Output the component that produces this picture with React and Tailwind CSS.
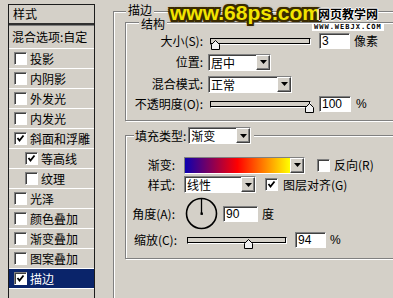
import React from 'react'

const sunken = 'border border-t-[#808080] border-l-[#808080] border-r-white border-b-white shadow-[inset_1px_1px_0_#404040]'
const raised = 'border border-t-white border-l-white border-r-[#404040] border-b-[#404040] shadow-[inset_-1px_-1px_0_#808080]'

const Check = ({ checked }) => (
    <span className={`flex items-center justify-center w-[13px] h-[13px] shrink-0 bg-white ${sunken}`}>
        {checked && (
            <svg width="9" height="9" viewBox="0 0 9 9">
                <path d="M1.5 4 L3.5 6.5 L7.5 1.5" fill="none" stroke="#000" strokeWidth="1.8" />
            </svg>
        )}
    </span>
)

const Field = ({ value, className }) => (
    <div className={`h-[16px] bg-white ${sunken} ${className} text-[12px] leading-[14px] pl-[2px] text-black [font-family:'Liberation_Sans',sans-serif]`}>
        {value}
    </div>
)

const Arrow = ({ className = '' }) => (
    <span className={`flex items-center justify-center w-[14px] bg-[#d4d0c8] ${raised} ${className}`}>
        <svg width="7" height="4" viewBox="0 0 7 4"><path d="M0 0H7L3.5 4Z" fill="#000" /></svg>
    </span>
)

const Select = ({ value, className }) => (
    <div className={`flex h-[17px] bg-white ${sunken} ${className}`}>
        <span className="flex-1 pl-[2px] text-[12px] leading-[15px]">{value}</span>
        <Arrow />
    </div>
)

const Thumb = ({ className }) => (
    <svg className={`absolute top-[1px] ${className}`} width="9" height="10" viewBox="0 0 9 10">
        <path d="M0.5 9.5 V4.5 L4.5 0.5 L8.5 4.5 V9.5 Z" fill="#f0f0f0" stroke="#000" />
    </svg>
)

const Slider = ({ className, thumb }) => (
    <div className={`relative h-[7px] border border-[#000] border-b-white border-r-white shadow-[inset_-1px_-1px_0_#000] bg-[#d4d0c8] ${className}`}>
        <Thumb className={thumb} />
    </div>
)

const STYLES = [
    { name: '投影' },
    { name: '内阴影' },
    { name: '外发光' },
    { name: '内发光' },
    { name: '斜面和浮雕', checked: true },
    { name: '等高线', checked: true, sub: true },
    { name: '纹理', sub: true },
    { name: '光泽' },
    { name: '颜色叠加' },
    { name: '渐变叠加' },
    { name: '图案叠加' },
    { name: '描边', checked: true, active: true },
]

export default function App() {
    return (
        <div className="relative flex w-[393px] h-[298px] overflow-hidden bg-[#d4d0c8] text-black text-[12px] [font-family:'Noto_Sans_CJK_SC',sans-serif]">
            {/* Style list */}
            <div className="ml-[8px] mt-[4px] w-[87px] h-[310px] shrink-0 border border-[#1c1c1c] flex flex-col">
                <div className="h-[18px] pl-[4px] leading-[18px]">样式</div>
                <div className="h-[3px] border-t-2 border-[#303030] border-b border-b-[#808080]" />
                <div className="h-[22px] pl-[3px] flex items-center whitespace-nowrap">混合选项:自定</div>
                {STYLES.map((s) => (
                    <div
                        key={s.name}
                        className={`h-[20px] border-t border-white flex items-center gap-[3px] ${s.sub ? 'pl-[16px]' : 'pl-[5px]'} ${s.active ? 'bg-[#0a246a] text-white' : ''}`}
                    >
                        <Check checked={s.checked} />
                        <span className="leading-[14px] whitespace-nowrap">{s.name}</span>
                    </div>
                ))}
                <div className="border-t border-white" />
            </div>

            {/* Stroke group */}
            <div className="relative ml-[18px] mt-[11px] w-[300px] h-[300px] shrink-0 border border-[#808080] shadow-[inset_1px_1px_0_#fff,1px_1px_0_#fff] pl-[11px] pt-[10px]">
                <span className="absolute -top-[8px] left-[12px] px-[2px] h-[12px] bg-[#d4d0c8] leading-[11px]">描边</span>

                {/* Structure */}
                <div className="relative h-[99px] border border-[#808080] shadow-[inset_1px_1px_0_#fff,1px_1px_0_#fff] flex flex-col">
                    <span className="absolute -top-[5px] left-[13px] px-[2px] h-[12px] bg-[#d4d0c8] leading-[11px]">结构</span>

                    <div className="mt-[8px] h-[20px] flex items-center">
                        <span className="w-[77px] text-right whitespace-nowrap">大小(S):</span>
                        <Slider className="ml-[7px] w-[101px]" thumb="left-[0px]" />
                        <Field value="3" className="ml-[8px] w-[31px]" />
                        <span className="ml-[4px]">像素</span>
                    </div>
                    <div className="mt-[1px] h-[20px] flex items-center">
                        <span className="w-[77px] text-right">位置:</span>
                        <Select value="居中" className="ml-[5px] w-[63px]" />
                    </div>
                    <div className="mt-[2px] h-[20px] flex items-center">
                        <span className="w-[77px] text-right">混合模式:</span>
                        <Select value="正常" className="ml-[5px] w-[84px]" />
                    </div>
                    <div className="h-[20px] flex items-center">
                        <span className="w-[77px] text-right whitespace-nowrap">不透明度(O):</span>
                        <Slider className="ml-[7px] w-[101px]" thumb="right-[-4px]" />
                        <Field value="100" className="ml-[8px] w-[32px]" />
                        <span className="ml-[5px] [font-family:'Liberation_Sans',sans-serif]">%</span>
                    </div>
                </div>

                {/* Fill type */}
                <div className="relative mt-[14px] h-[124px] border border-[#808080] shadow-[inset_1px_1px_0_#fff,1px_1px_0_#fff] flex flex-col">
                    <div className="absolute -top-[9px] left-[8px] flex items-center gap-[2px] pl-[1px] pr-[3px] bg-[#d4d0c8]">
                        <span className="leading-[14px]">填充类型:</span>
                        <Select value="渐变" className="w-[63px]" />
                    </div>

                    <div className="mt-[21px] h-[16px] flex items-center">
                        <span className="w-[49px] text-right">渐变:</span>
                        <div className={`ml-[9px] w-[121px] h-[17px] flex ${sunken}`}>
                            <div className="flex-1 bg-[linear-gradient(to_right,#0c00b0,#ff0000_50%,#ffff00)]" />
                            <Arrow className="w-[10px]" />
                        </div>
                        <span className="ml-[12px]"><Check /></span>
                        <span className="ml-[4px] whitespace-nowrap">反向(R)</span>
                    </div>
                    <div className="mt-[3px] h-[17px] flex items-center">
                        <span className="w-[49px] text-right">样式:</span>
                        <Select value="线性" className="ml-[9px] w-[72px]" />
                        <span className="ml-[9px]"><Check checked /></span>
                        <span className="ml-[5px] whitespace-nowrap">图层对齐(G)</span>
                    </div>
                    <div className="mt-[4px] h-[33px] flex items-center">
                        <span className="w-[49px] text-right whitespace-nowrap">角度(A):</span>
                        <svg className="ml-[10px]" width="33" height="33" viewBox="0 0 33 33">
                            <circle cx="16.5" cy="16.5" r="15" fill="none" stroke="#000" strokeWidth="1.6" />
                            <line x1="16.5" y1="16.5" x2="16.5" y2="2" stroke="#000" strokeWidth="1.3" />
                            <rect x="15.5" y="15.5" width="2.4" height="2.4" fill="#000" />
                        </svg>
                        <Field value="90" className="ml-[5px] w-[35px]" />
                        <span className="ml-[4px]">度</span>
                    </div>
                    <div className="mt-[2px] h-[16px] flex items-center">
                        <span className="w-[51px] text-right whitespace-nowrap">缩放(C):</span>
                        <Slider className="ml-[10px] w-[100px]" thumb="left-[56px]" />
                        <Field value="94" className="ml-[8px] w-[31px]" />
                        <span className="ml-[4px] [font-family:'Liberation_Sans',sans-serif]">%</span>
                    </div>
                </div>
            </div>

            {/* Watermarks */}
            <div className="absolute top-[0px] left-[170px] text-[21px] font-bold leading-[26px] text-[#f2e400] [font-family:'Liberation_Sans',sans-serif] [text-shadow:2px_0_0_#3a2a00,-2px_0_0_#3a2a00,0_2px_0_#3a2a00,0_-2px_0_#3a2a00,2px_2px_0_#3a2a00,-2px_-2px_0_#3a2a00,2px_-2px_0_#3a2a00,-2px_2px_0_#3a2a00,0_0_4px_#6a5000]">
                www.68ps.com
            </div>
            <div className="absolute top-[7px] left-[312px] flex flex-col items-center">
                <span className="text-[12px] leading-[14px] font-bold text-black [text-shadow:1px_0_0_#fff,-1px_0_0_#fff,0_1px_0_#fff,0_-1px_0_#fff]">网页教学网</span>
                <span className="mt-[2px] px-[2px] bg-white text-[7px] leading-[8px] font-bold tracking-[1px] text-black [font-family:'DejaVu_Sans_Mono',monospace]">WWW.WEBJX.COM</span>
            </div>
        </div>
    )
}
